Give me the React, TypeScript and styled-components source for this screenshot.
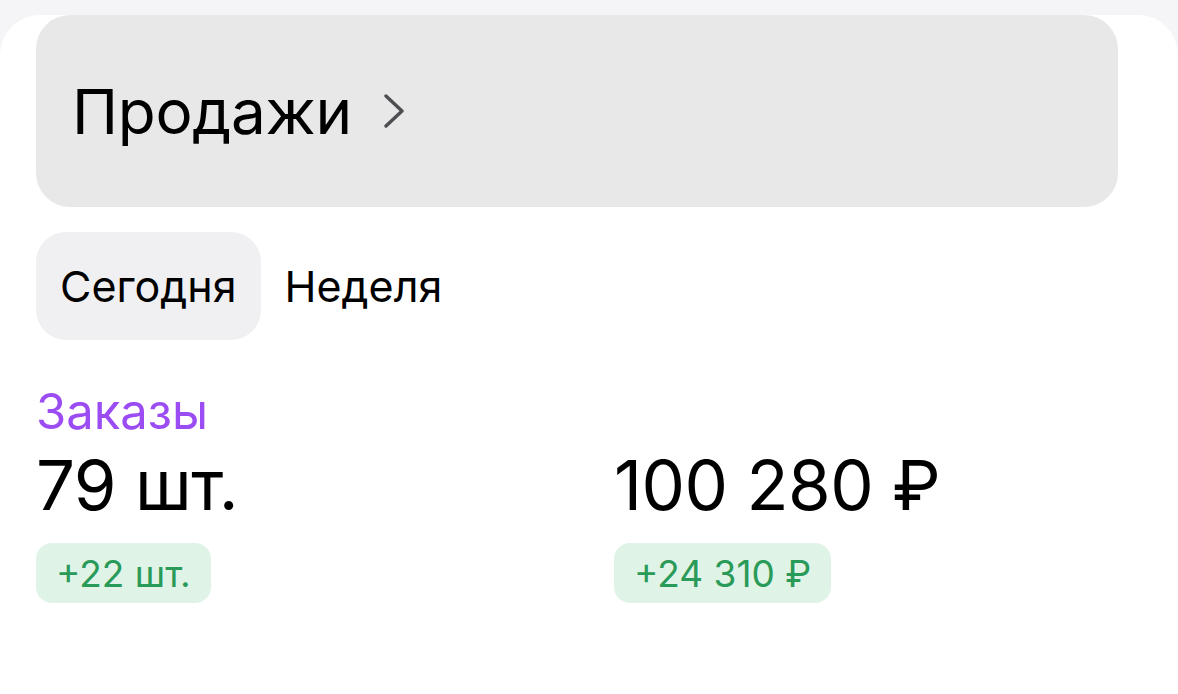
import React from "react";
import styled, { createGlobalStyle } from "styled-components";

const Global = createGlobalStyle`
  html, body { margin: 0; padding: 0; background: #f5f5f7; }
  body { font-family: Inter, "Noto Sans", sans-serif; color: #000; }
  * { box-sizing: border-box; }
`;

const Card = styled.main`
  margin-top: 15px;
  background: #ffffff;
  border-radius: 40px 40px 0 0;
  padding: 0 60px 90px 36px;
  min-height: 679px;
`;

const Header = styled.a`
  display: flex;
  align-items: center;
  gap: 31px;
  height: 192px;
  padding-left: 36px;
  background: #e8e8e9;
  border-radius: 34px;
  text-decoration: none;
  color: #000;
`;

const Title = styled.h1`
  margin: 0;
  font-size: 62px;
  font-weight: 400;
  letter-spacing: -0.3px;
`;

const Tabs = styled.div`
  display: flex;
  margin-top: 25px;
`;

const Tab = styled.button<{ $active?: boolean }>`
  height: 108px;
  padding: 0 24px;
  border: none;
  border-radius: 30px;
  background: ${(p) => (p.$active ? "#f0f0f2" : "transparent")};
  font-family: Inter, sans-serif;
  font-size: 43px;
  color: #000;
`;

const Label = styled.div`
  margin-top: 42px;
  font-size: 49px;
  color: #9b4cf2;
  line-height: 60px;
`;

const Stats = styled.div`
  display: grid;
  grid-template-columns: 578px 1fr;
`;

const Stat = styled.div`
  display: flex;
  flex-direction: column;
  align-items: flex-start;
`;

const Value = styled.div`
  font-size: 69px;
  line-height: 86px;
  letter-spacing: -0.5px;
`;

const Delta = styled.div`
  margin-top: 15px;
  height: 60px;
  padding: 0 20px;
  display: flex;
  align-items: center;
  border-radius: 16px;
  background: #e0f3e7;
  color: #2a9a58;
  font-size: 37px;
`;

const Chevron = () => (
  <svg width="22" height="34" viewBox="0 0 22 34" fill="none">
    <path d="M3 2 L19 17 L3 32" stroke="#4d4d52" strokeWidth="3.4" strokeLinecap="round" strokeLinejoin="round" />
  </svg>
);

export default function App() {
  return (
    <>
      <Global />
      <Card>
        <Header href="#">
          <Title>Продажи</Title>
          <Chevron />
        </Header>
        <Tabs>
          <Tab $active>Сегодня</Tab>
          <Tab>Неделя</Tab>
        </Tabs>
        <Label>Заказы</Label>
        <Stats>
          <Stat>
            <Value>79 шт.</Value>
            <Delta>+22 шт.</Delta>
          </Stat>
          <Stat>
            <Value>100 280 ₽</Value>
            <Delta>+24 310 ₽</Delta>
          </Stat>
        </Stats>
      </Card>
    </>
  );
}
